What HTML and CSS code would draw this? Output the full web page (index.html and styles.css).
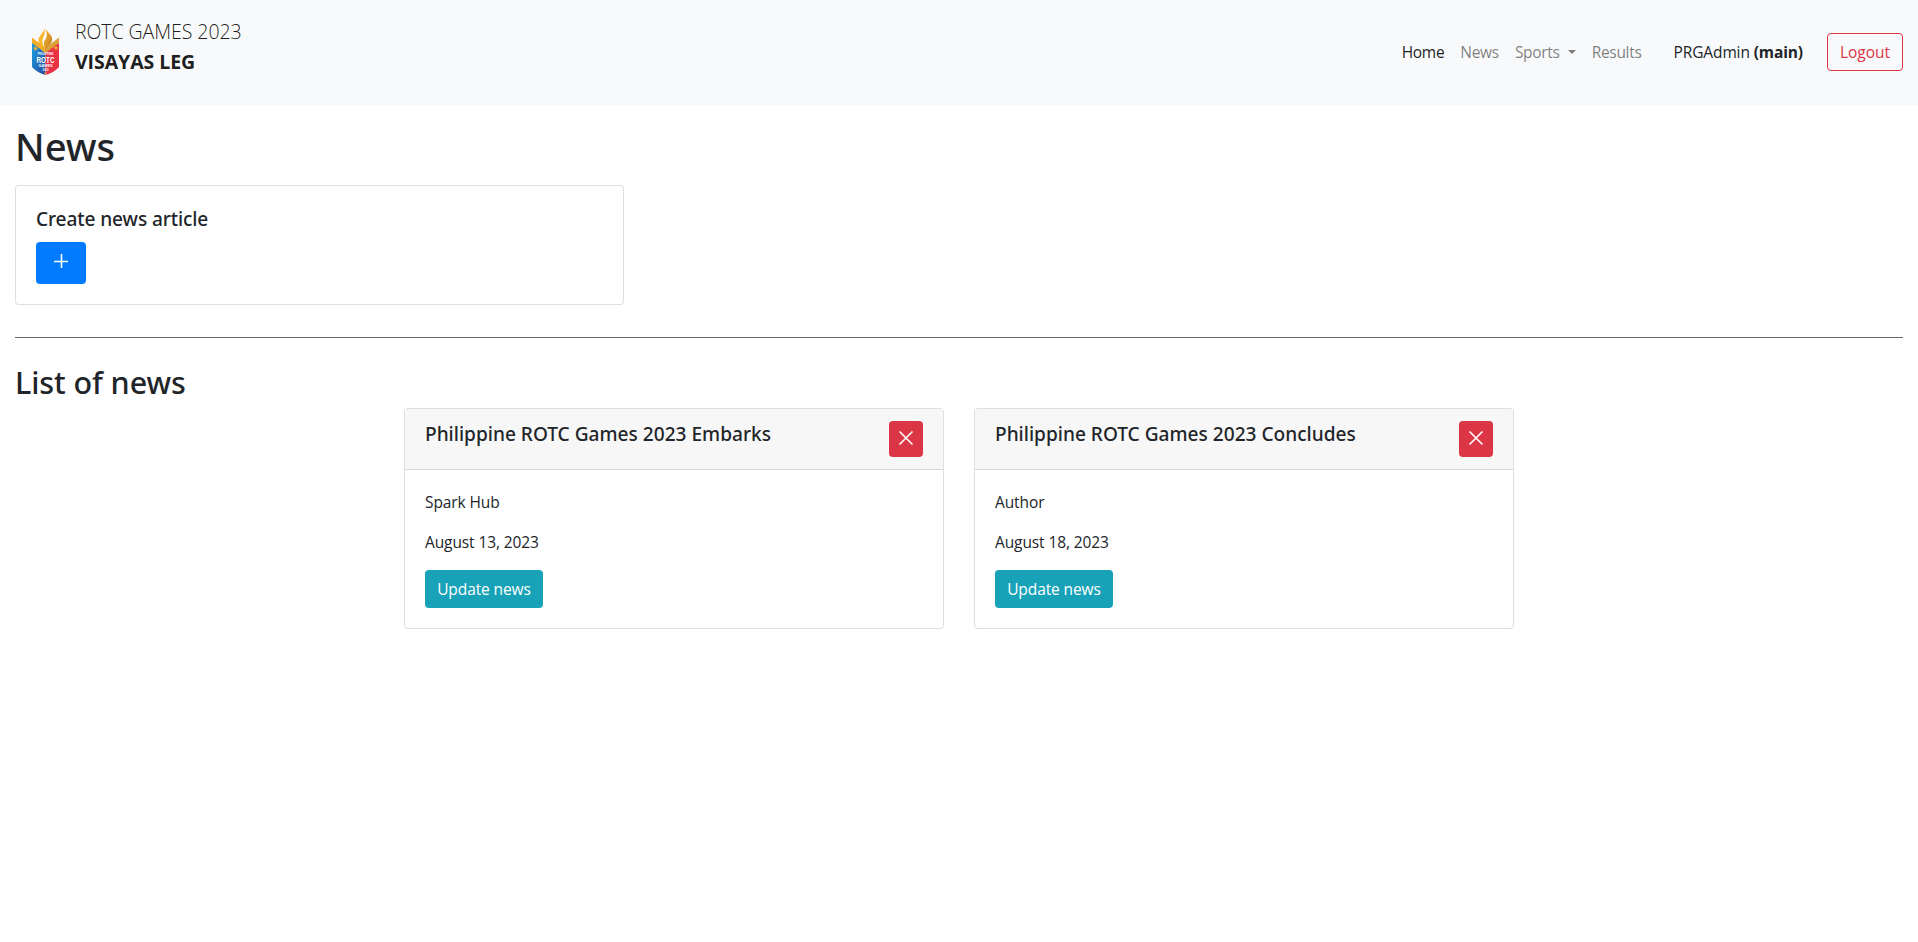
FILE: index.html
```html
<!DOCTYPE html>
<html lang="en">
<head>
<meta charset="utf-8">
<title>News</title>
<link rel="stylesheet" href="styles.css">
</head>
<body>
<nav class="navbar">
  <a class="brand">
    <svg class="logo" viewBox="0 0 29 48">
      <defs>
        <linearGradient id="blue" x1="0" y1="0" x2="1" y2="1"><stop offset="0" stop-color="#1ba0e4"/><stop offset="1" stop-color="#234a9c"/></linearGradient>
        <linearGradient id="gold" x1="0" y1="0" x2="1" y2="1"><stop offset="0" stop-color="#f8b92c"/><stop offset="1" stop-color="#c07b22"/></linearGradient>
      </defs>
      <path d="M1 15 14.5 20V47Q5 44 1 39Z" fill="url(#blue)"/>
      <path d="M28 15 14.5 20V47Q24 44 28 39Z" fill="#e83345"/>
      <path d="M14.5 25 1 15V9.500L14.500 20Z" fill="#f3ac28"/>
      <path d="M14.500 25 28 15V9.500L14.500 20Z" fill="#dda13a"/>
      <path d="M14.500 21Q5 15 8 9.500Q10 6.500 14 1Q14 7 12 10.500Q10 15 14.500 21Z" fill="#f9b82c"/>
      <path d="M14 .5Q17 4 20 7.500Q23 12 18.500 17L14.500 21Q11 15 15 10.500Q17 6 14 .5Z" fill="url(#gold)"/>
      <path d="m4.500 18 .7 1.600 1.800.1-1.400 1.200.5 1.800-1.600-1-1.600 1 .5-1.800L2 19.700l1.800-.1ZM25 17.500l.7 1.600 1.600.1-1.200 1.200.4 1.700-1.500-1-1.600 1 .5-1.700-1.400-1.200 1.800-.1Z" fill="#f5ad35"/>
      <text x="14.500" y="26.500" class="logo-small">PHILIPPINE</text>
      <text x="14.500" y="34.800" class="logo-main" textLength="18" lengthAdjust="spacingAndGlyphs">ROTC</text>
      <text x="14.500" y="38.800" class="logo-mid">GAMES</text>
      <text x="14.500" y="42.800" class="logo-small">2023</text>
      <path d="m14.500 43.500 1.200 1.700-1.200 1.500-1.200-1.500Z" fill="#e99555"/>
    </svg>
    <span class="brand-text"><span>ROTC GAMES 2023</span><strong>VISAYAS LEG</strong></span>
  </a>
  <div class="nav-links">
    <a class="active">Home</a>
    <a>News</a>
    <a class="dropdown">Sports</a>
    <a>Results</a>
  </div>
  <span class="user">PRGAdmin <strong>(main)</strong></span>
  <button class="btn btn-outline">Logout</button>
</nav>
<main class="page">
  <h1>News</h1>
  <section class="card create">
    <div class="card-body">
      <h5>Create news article</h5>
      <button class="btn btn-add" aria-label="Create"><svg width="16" height="16" viewBox="0 0 16 16"><path d="M8.500 1v14M1 8.500h14"/></svg></button>
    </div>
  </section>
  <hr>
  <h2>List of news</h2>
  <div class="news-list">
    <article class="card">
      <header class="card-header">
        <h5>Philippine ROTC Games 2023 Embarks</h5>
        <button class="btn btn-delete" aria-label="Delete"><svg width="16" height="16" viewBox="0 0 16 16"><path d="m1.500 1.500 13 13M14.500 1.500l-13 13"/></svg></button>
      </header>
      <div class="card-body">
        <p>Spark Hub</p>
        <p>August 13, 2023</p>
        <button class="btn btn-info">Update news</button>
      </div>
    </article>
    <article class="card">
      <header class="card-header">
        <h5>Philippine ROTC Games 2023 Concludes</h5>
        <button class="btn btn-delete" aria-label="Delete"><svg width="16" height="16" viewBox="0 0 16 16"><path d="m1.500 1.500 13 13M14.500 1.500l-13 13"/></svg></button>
      </header>
      <div class="card-body">
        <p>Author</p>
        <p>August 18, 2023</p>
        <button class="btn btn-info">Update news</button>
      </div>
    </article>
  </div>
</main>
</body>
</html>
```
FILE: styles.css
```css
* { box-sizing: border-box; }
body { margin: 0; background: #fff; color: #212529; font: 400 15.5px/24px "Open Sans", "Noto Sans", sans-serif; }
h1, h2, h5, p { margin: 0; }
h1, h2, h5 { font-family: "Noto Sans", sans-serif; font-weight: 500; }
h1 { font-size: 38.2px; line-height: 48px; padding-top: 1px; margin-bottom: 15px; }
h2 { font-size: 30.5px; line-height: 38px; padding-top: 1px; margin-bottom: 7px; letter-spacing: -.1px; }
h5 { font-size: 19.1px; line-height: 24px; padding-top: 1px; }

.navbar { display: flex; align-items: center; height: 105px; padding: 0 15px 1px 31px; background: #f8f9fa; }
.brand { display: flex; align-items: flex-start; gap: 15px; height: 70px; margin-right: auto; color: rgba(0, 0, 0, .9); }
.logo { width: 29px; height: 48px; margin-top: 11px; overflow: visible; }
.logo text { fill: #fff; font-family: "Liberation Sans", sans-serif; font-weight: 700; text-anchor: middle; }
.logo-main { font-size: 9px; }
.logo-mid { font-size: 3.8px; }
.logo-small { font-size: 2.8px; }
.brand-text { display: flex; flex-direction: column; font-size: 19.5px; font-weight: 300; line-height: 30px; letter-spacing: -.06px; }
.brand-text strong { font-weight: 700; }
.nav-links { display: flex; gap: 16px; color: rgba(0, 0, 0, .5); letter-spacing: -.3px; }
.nav-links .active { color: rgba(0, 0, 0, .9); }
.dropdown::after { content: ""; display: inline-block; margin-left: 8px; vertical-align: 4px; border: 4.8px solid transparent; border-top-color: currentColor; border-bottom: 0; }
.user { margin: 0 24px 0 32px; letter-spacing: -.12px; }

.btn { display: flex; align-items: center; justify-content: center; height: 38px; padding: 0; border: 1px solid transparent; border-radius: 4px; background: none; color: #fff; font: inherit; white-space: nowrap; }
.btn svg { fill: none; stroke: #fff; stroke-width: 1.6; }
.btn-outline { width: 76px; border-color: #dc3545; color: #dc3545; }
.btn-add { width: 50px; height: 42px; padding: 0 0 4px; background: #007bff; }
.btn-delete { width: 34px; height: 36px; padding: 0 0 2px; background: #dc3545; }
.btn-info { width: 118px; background: #17a2b8; letter-spacing: -.1px; }

.page { padding: 16px 15px 0; }
.card { border: 1px solid rgba(0, 0, 0, .125); border-radius: 4px; background: #fff; }
.card-body { padding: 20px; }
.card-body h5 { margin-bottom: 11px; letter-spacing: -.1px; }
.card-body p { margin-bottom: 16px; letter-spacing: -.1px; }
.create { width: 609px; }
.card-header { display: flex; justify-content: space-between; padding: 12px 20px; border-bottom: 1px solid rgba(0, 0, 0, .125); background: #f7f7f7; }
hr { height: 1px; margin: 32px 0 24px; border: 0; background: #656a70; }
.news-list { display: grid; grid-template-columns: 540px 540px; justify-content: center; gap: 30px; }
```
